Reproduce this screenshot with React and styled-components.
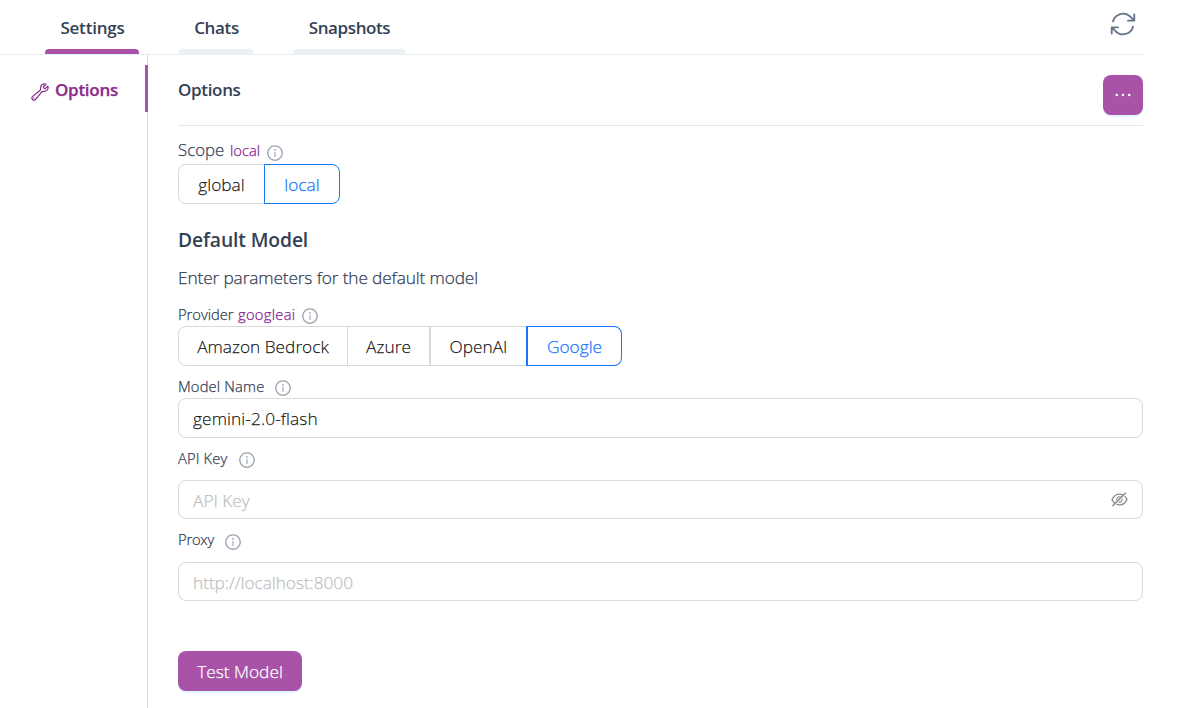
import React from 'react';
import styled, { createGlobalStyle } from 'styled-components';
import { AiOutlineInfoCircle, AiOutlineEyeInvisible } from 'react-icons/ai';
import { HiOutlineWrench, HiOutlineArrowPath } from 'react-icons/hi2';

const GlobalStyle = createGlobalStyle`
  *, *::before, *::after { box-sizing: border-box; }
  body {
    margin: 0;
    background: #fff;
    color: #334155;
    font-family: "Open Sans", "Noto Sans", sans-serif;
    font-size: 17.3px;
    font-weight: 300;
    -webkit-text-stroke: 0.25px;
    overflow: hidden;
  }
  button, input { font: inherit; margin: 0; -webkit-text-stroke: inherit; }
  h1, h2, p { margin: 0; }
`;

const Page = styled.div`
  height: 708px;
  padding-right: 36px;
  display: flex;
  flex-direction: column;
`;

const Header = styled.header`
  height: 55px;
  padding-left: 45px;
  display: flex;
  justify-content: space-between;
  border-bottom: 1px solid #e6eff4;
`;

const TabList = styled.nav`
  display: flex;
  gap: 40px;
`;

const Tab = styled.div`
  width: ${(p) => p.$width}px;
  height: 54px;
  display: flex;
  flex-direction: column;
  align-items: center;
  justify-content: space-between;
  font-size: 17px;
  font-weight: 600;
  line-height: 56px;
  letter-spacing: ${(p) => p.$spacing || 0}px;
  white-space: nowrap;
  -webkit-text-stroke: 0;

  span { height: 49px; padding-left: 1px; }

  &::after {
    content: "";
    width: 100%;
    height: 5px;
    border-radius: 4px 4px 0 0;
    background: ${(p) => (p.$active ? '#a953a8' : '#ebf1f5')};
  }
`;

const Refresh = styled(HiOutlineArrowPath)`
  width: 30px;
  height: 30px;
  margin: 9px 5px 0 0;
  color: #64748b;
`;

const Body = styled.div`
  flex: 1;
  display: flex;
`;

const Sidebar = styled.aside`
  width: 148px;
  padding-top: 10px;
  border-right: 1px solid #d9d9d9;
`;

const SideItem = styled.div`
  height: 47px;
  margin-right: -1px;
  padding-left: 30px;
  display: flex;
  align-items: center;
  gap: 5px;
  border-right: 3px solid #a953a8;
  color: #8a2c8a;
  font-size: 17px;
  font-weight: 600;
  letter-spacing: -0.28px;

  svg { width: 20px; height: 20px; margin-top: 7px; flex: none; }
  span { line-height: 24px; margin-top: 2px; }
`;

const Main = styled.main`
  flex: 1;
  padding-left: 30px;
`;

const TitleBar = styled.div`
  height: 71px;
  padding-top: 20px;
  display: flex;
  justify-content: space-between;
  border-bottom: 1px solid #e5e7eb;
`;

const Title = styled.h1`
  font-size: 17px;
  line-height: 29px;
  font-weight: 600;
  letter-spacing: -0.33px;
  -webkit-text-stroke: 0;
`;

const PrimaryButton = styled.button`
  width: ${(p) => p.$width}px;
  height: 40px;
  padding: 0;
  display: flex;
  align-items: center;
  justify-content: center;
  border: 0;
  border-radius: 8px;
  background: #a953a8;
  box-shadow: 0 2px 0 rgba(5, 145, 255, 0.1);
  color: #fff;
`;

const Label = styled.div`
  height: ${(p) => p.$height}px;
  padding-top: ${(p) => p.$top}px;
  display: flex;
  align-items: flex-start;
  line-height: 18px;
  font-size: 14.7px;
  white-space: nowrap;

  svg {
    width: 18px;
    height: 18px;
    margin: ${(p) => p.$iconTop || 2}px 0 0 ${(p) => p.$gap}px;
    color: #9ca3af;
    flex: none;
  }
`;

const LabelText = styled.span`
  width: ${(p) => p.$width}px;
  font-size: ${(p) => p.$size || 14.7}px;
  letter-spacing: ${(p) => p.$spacing || 0}px;
`;

const LabelValue = styled.span`
  width: ${(p) => p.$width}px;
  margin-left: 5px;
  color: #86198f;
  letter-spacing: ${(p) => p.$spacing || 0}px;
`;

const Group = styled.div`
  display: flex;
  height: 40px;
`;

const Choice = styled.button`
  width: ${(p) => p.$width}px;
  height: 40px;
  padding: 0;
  display: flex;
  align-items: center;
  justify-content: center;
  background: #fff;
  border: 1px solid ${(p) => (p.$selected ? '#1677ff' : '#d9d9d9')};
  border-left-width: ${(p) => p.$leftBorder || 1}px;
  color: ${(p) => (p.$selected ? '#1677ff' : 'rgba(0, 0, 0, 0.88)')};
  white-space: nowrap;

  &:not(:first-child) { margin-left: -1px; }
  &:first-child { border-radius: 8px 0 0 8px; }
  &:last-child { border-radius: 0 8px 8px 0; position: relative; }
`;

const Heading = styled.h2`
  margin-top: 20px;
  font-size: 19.3px;
  font-weight: 600;
  line-height: 32px;
  letter-spacing: -0.12px;
  -webkit-text-stroke: 0;
`;

const Intro = styled.p`
  height: 48px;
  padding-top: 6px;
  line-height: 32px;
  white-space: nowrap;
  letter-spacing: -0.13px;
`;

const Field = styled.div`
  height: ${(p) => p.$height || 39}px;
  padding: 0 14px;
  display: flex;
  align-items: center;
  border: 1px solid #d9d9d9;
  border-radius: 8px;

  svg { width: 19px; height: 19px; margin-right: -1px; color: #8c8c8c; flex: none; }
`;

const Input = styled.input`
  flex: 1;
  min-width: 0;
  height: 30px;
  padding: ${(p) => p.$top ?? 2}px 0 0;
  border: 0;
  outline: 0;
  background: none;
  color: rgba(0, 0, 0, 0.88);
  letter-spacing: ${(p) => p.$spacing || 0}px;

  &::placeholder { color: #bfbfbf; opacity: 1; }
`;

const Footer = styled.div`
  padding-top: 50px;
`;

export default function App() {
  return (
    <>
      <GlobalStyle />
      <Page>
        <Header>
          <TabList>
            <Tab $active $width={94} $spacing={-0.2}><span>Settings</span></Tab>
            <Tab $width={74} $spacing={-0.35}><span>Chats</span></Tab>
            <Tab $width={112} $spacing={-0.4}><span>Snapshots</span></Tab>
          </TabList>
          <Refresh />
        </Header>
        <Body>
          <Sidebar>
            <SideItem><HiOutlineWrench /><span>Options</span></SideItem>
          </Sidebar>
          <Main>
            <TitleBar>
              <Title>Options</Title>
              <PrimaryButton $width={40} aria-label="More">
                <svg width="18" height="18" viewBox="0 0 18 18" fill="#fff" stroke="none">
                  <circle cx="2.8" cy="9" r="1.3" />
                  <circle cx="9" cy="9" r="1.3" />
                  <circle cx="15.2" cy="9" r="1.3" />
                </svg>
              </PrimaryButton>
            </TitleBar>
            <Label $height={38} $top={15} $gap={6} $iconTop={3}>
              <LabelText $width={47} $size={16.8}>Scope</LabelText>
              <LabelValue $width={30}>local</LabelValue>
              <AiOutlineInfoCircle />
            </Label>
            <Group>
              <Choice $width={87}>global</Choice>
              <Choice $width={76} $selected>local</Choice>
            </Group>
            <Heading>Default Model</Heading>
            <Intro>Enter parameters for the default model</Intro>
            <Label $height={22} $top={1} $gap={5}>
              <LabelText $width={55}>Provider</LabelText>
              <LabelValue $width={58} $spacing={0.3}>googleai</LabelValue>
              <AiOutlineInfoCircle />
            </Label>
            <Group>
              <Choice $width={170}>Amazon Bedrock</Choice>
              <Choice $width={83}>Azure</Choice>
              <Choice $width={98} $leftBorder={2}>OpenAI</Choice>
              <Choice $width={96} $leftBorder={2} $selected>Google</Choice>
            </Group>
            <Label $height={32} $top={11} $gap={10}>
              <LabelText $width={86} $spacing={0.18}>Model Name</LabelText>
              <AiOutlineInfoCircle />
            </Label>
            <Field $height={40}><Input $top={0} $spacing={0.1} defaultValue="gemini-2.0-flash" /></Field>
            <Label $height={42} $top={11} $gap={10}>
              <LabelText $width={50} $spacing={0.15}>API Key</LabelText>
              <AiOutlineInfoCircle />
            </Label>
            <Field>
              <Input placeholder="API Key" />
              <AiOutlineEyeInvisible />
            </Field>
            <Label $height={43} $top={11} $gap={10} $iconTop={3}>
              <LabelText $width={36} $spacing={-0.2}>Proxy</LabelText>
              <AiOutlineInfoCircle />
            </Label>
            <Field><Input $spacing={-0.05} placeholder="http://localhost:8000" /></Field>
            <Footer>
              <PrimaryButton $width={124}>Test Model</PrimaryButton>
            </Footer>
          </Main>
        </Body>
      </Page>
    </>
  );
}
